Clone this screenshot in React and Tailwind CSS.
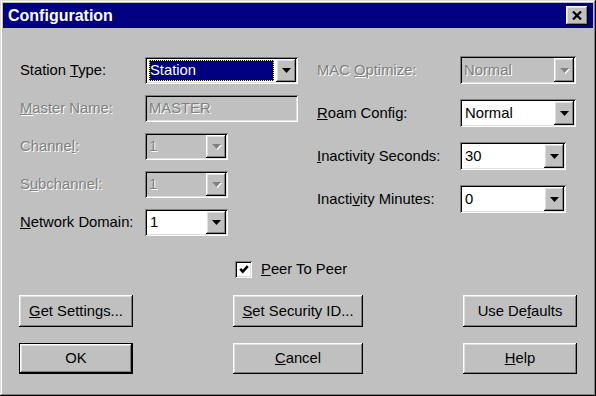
const RAISED = 'shadow-[inset_-1px_-1px_#000,inset_1px_1px_#fff,inset_-2px_-2px_#808080,inset_2px_2px_#dfdfdf]'
const SUNKEN = 'shadow-[inset_1px_1px_#808080,inset_-1px_-1px_#fff,inset_2px_2px_#000,inset_-2px_-2px_#dfdfdf]'
const ETCH = '[text-shadow:1px_1px_0_#fff]'

function Arrow({ disabled }) {
  return (
    <svg width="9" height="5" viewBox="0 0 9 5" className={disabled ? 'drop-shadow-[1px_1px_0_#fff]' : ''}>
      <path d="M0 0h9L4.5 5z" fill={disabled ? '#808080' : '#000'} />
    </svg>
  )
}

function Combo({ value, width, disabled, focused }) {
  return (
    <div className={`flex h-full items-center ${SUNKEN} ${disabled ? 'bg-[#c0c0c0]' : 'bg-white'}`} style={{ width }}>
      <div className="flex-1 h-full flex items-center pl-[4px] pr-[2px] py-[3px]">
        {focused ? (
          <span className="w-full h-full flex items-center bg-[#000080] text-white px-[1px] outline-1 outline-dotted outline-[#ffff40] -outline-offset-1">
            {value}
          </span>
        ) : (
          <span className={disabled ? `text-[#808080] ${ETCH}` : 'text-black pl-[1px]'}>{value}</span>
        )}
      </div>
      <div className={`w-[20px] h-[calc(100%-4px)] mr-[2px] bg-[#c0c0c0] flex items-center justify-center ${RAISED}`}>
        <Arrow disabled={disabled} />
      </div>
    </div>
  )
}

function Label({ children, disabled, width }) {
  return (
    <div className={`shrink-0 ${disabled ? `text-[#808080] ${ETCH}` : 'text-black'}`} style={{ width }}>
      {children}
    </div>
  )
}

function Button({ children, width, isDefault }) {
  return (
    <div
      className={`flex items-center justify-center bg-[#c0c0c0] ${isDefault
        ? 'shadow-[inset_0_0_0_1px_#000,inset_-2px_-2px_#000,inset_2px_2px_#fff,inset_-3px_-3px_#808080,inset_3px_3px_#dfdfdf]'
        : RAISED}`}
      style={{ width }}
    >
      {children}
    </div>
  )
}

export default function App() {
  return (
    <div className={`w-[596px] h-[396px] bg-[#c0c0c0] p-[3px] flex flex-col font-['Liberation_Sans',Arial,sans-serif] text-[14.8px] text-black shadow-[inset_-1px_-1px_#000,inset_1px_1px_#dfdfdf,inset_-2px_-2px_#808080,inset_2px_2px_#fff]`}>
      {/* Title bar */}
      <div className="h-[25px] bg-[#000080] flex items-center justify-between pl-[5px] pr-[5px]">
        <span className="text-white font-bold text-[16px] leading-none">Configuration</span>
        <div className={`w-[22px] h-[19px] bg-[#c0c0c0] flex items-center justify-center ${RAISED}`}>
          <svg width="10" height="9" viewBox="0 0 10 9">
            <path d="M1 0.5l8 8M9 0.5l-8 8" stroke="#000" strokeWidth="2.2" />
          </svg>
        </div>
      </div>

      <div className="flex-1 flex flex-col pl-[16px]">
        {/* Fields */}
        <div className="flex items-start mt-[28px]">
          <div className="ml-[1px] mt-[1px] w-[278px] flex flex-col gap-[11px]">
            <div className="h-[27px] flex items-center">
              <Label width={125}>Station <u>T</u>ype:</Label>
              <Combo value="Station" width={153} focused />
            </div>
            <div className="h-[27px] flex items-center">
              <Label width={125} disabled><u>M</u>aster Name:</Label>
              <div className={`w-[153px] h-full bg-[#c0c0c0] flex items-center pl-[4px] text-[#808080] ${SUNKEN}`}>
                <span className={ETCH}>MASTER</span>
              </div>
            </div>
            <div className="h-[27px] flex items-center">
              <Label width={125} disabled>Channe<u>l</u>:</Label>
              <Combo value="1" width={83} disabled />
            </div>
            <div className="h-[27px] flex items-center">
              <Label width={125} disabled>S<u>u</u>bchannel:</Label>
              <Combo value="1" width={83} disabled />
            </div>
            <div className="h-[27px] flex items-center">
              <Label width={125}><u>N</u>etwork Domain:</Label>
              <Combo value="1" width={83} />
            </div>
          </div>

          <div className="ml-[19px] flex flex-col gap-[15px]">
            <div className="h-[28px] flex items-center">
              <Label width={143} disabled>MAC <u>O</u>ptimize:</Label>
              <Combo value="Normal" width={116} disabled />
            </div>
            <div className="h-[28px] flex items-center">
              <Label width={143}><u>R</u>oam Config:</Label>
              <Combo value="Normal" width={116} />
            </div>
            <div className="h-[28px] flex items-center">
              <Label width={143}><u>I</u>nactivity Seconds:</Label>
              <Combo value="30" width={106} />
            </div>
            <div className="h-[28px] flex items-center">
              <Label width={143}>Inacti<u>v</u>ity Minutes:</Label>
              <Combo value="0" width={106} />
            </div>
          </div>
        </div>

        {/* Checkbox */}
        <div className="mt-[25px] ml-[216px] h-[16px] flex items-center gap-[9px]">
          <div className={`w-[17px] h-[17px] bg-white flex items-center justify-center ${SUNKEN}`}>
            <svg width="10" height="9" viewBox="0 0 10 9">
              <path d="M1.2 3.8l2.6 2.8L8.8 1.2" stroke="#000" strokeWidth="2.6" fill="none" />
            </svg>
          </div>
          <span><u>P</u>eer To Peer</span>
        </div>

        {/* Buttons */}
        <div className="mt-[18px] h-[32px] flex gap-[100px]">
          <Button width={114}><span><u>G</u>et Settings...</span></Button>
          <Button width={130}><span><u>S</u>et Security ID...</span></Button>
          <Button width={114}><span>Use De<u>f</u>aults</span></Button>
        </div>
        <div className="mt-[16px] h-[31px] flex gap-[100px]">
          <Button width={114} isDefault><span>OK</span></Button>
          <Button width={130}><span><u>C</u>ancel</span></Button>
          <Button width={114}><span><u>H</u>elp</span></Button>
        </div>
      </div>
    </div>
  )
}
